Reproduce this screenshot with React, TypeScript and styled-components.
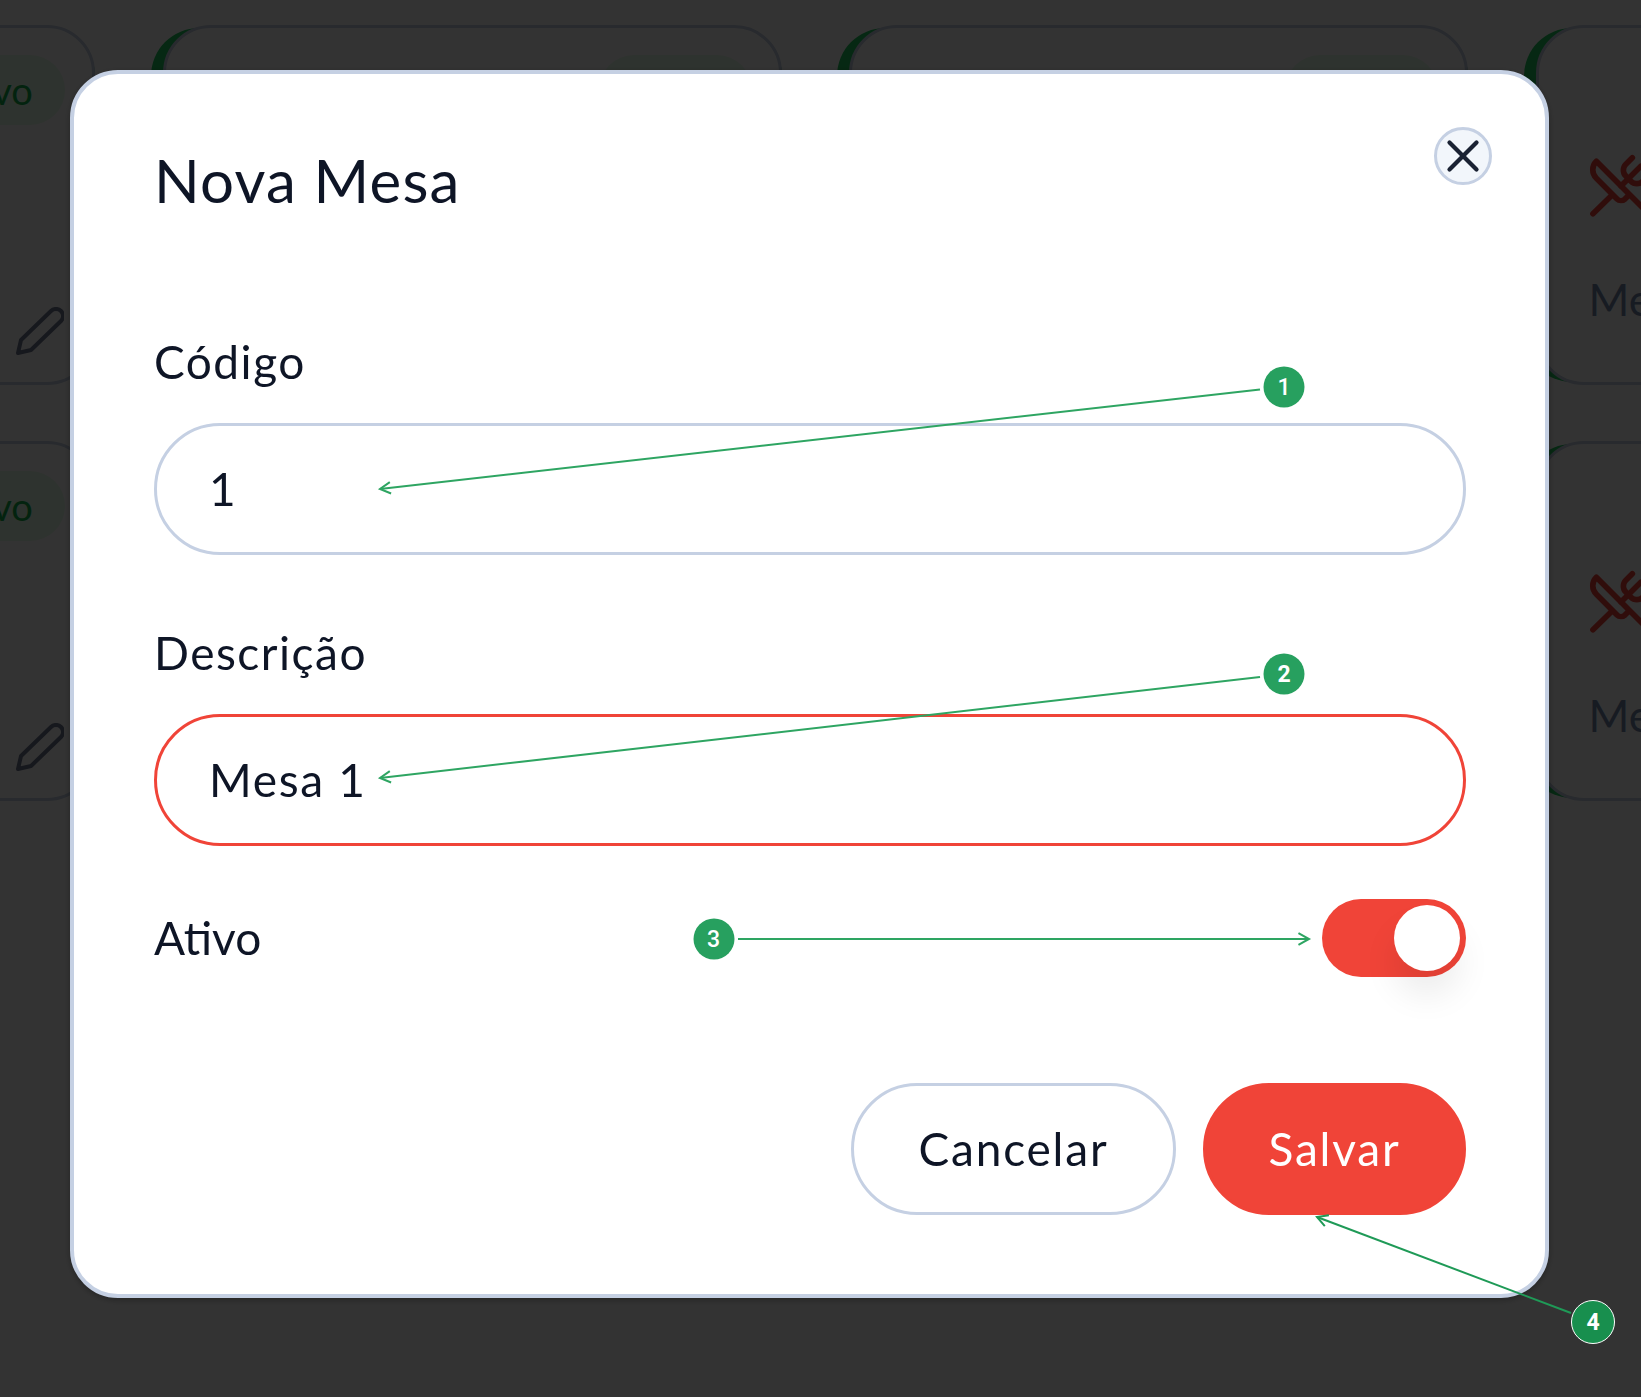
import styled, { createGlobalStyle } from 'styled-components';
import { UtensilsCrossed, X } from 'lucide-react';

const GlobalStyle = createGlobalStyle`
  html, body {
    margin: 0;
    padding: 0;
  }
  body {
    width: 1641px;
    height: 1397px;
    overflow: hidden;
    background: #ffffff;
    font-family: 'Lato', 'Noto Sans', sans-serif;
  }
`;

const tables = [1, 2, 3, 4, 5, 6, 7, 8];

const PencilIcon = () => (
  <svg width="50" height="50" viewBox="0 0 50 50" fill="none" stroke="currentColor" strokeWidth="4" strokeLinejoin="round">
    <path d="M37 4 A7 7 0 0 1 47 14 L17 43 L4 46 L7 33 Z" />
  </svg>
);

const TableCard = ({ name }: { name: string }) => (
  <CardEdge>
    <Card>
      <CardInfo>
        <UtensilsCrossed size={68} strokeWidth={2} color="#f04438" />
        <TableName>{name}</TableName>
      </CardInfo>
      <CardSide>
        <StatusPill>Ativo</StatusPill>
        <EditButton>
          <PencilIcon />
        </EditButton>
      </CardSide>
    </Card>
  </CardEdge>
);

const arrows = [
  { from: [1260, 389.5], to: [380, 489], color: '#2ea562' },
  { from: [1260, 677], to: [380, 778], color: '#2ea562' },
  { from: [738, 939], to: [1309, 939], color: '#2ea562' },
  { from: [1571, 1313], to: [1317, 1217], color: '#1f9a57' },
];

const arrowHead = (from: number[], to: number[]) => {
  const angle = Math.atan2(from[1] - to[1], from[0] - to[0]);
  const point = (delta: number) =>
    `${to[0] + 12 * Math.cos(angle + delta)},${to[1] + 12 * Math.sin(angle + delta)}`;
  return `${point(0.5)} ${to[0]},${to[1]} ${point(-0.5)}`;
};

export default function App() {
  return (
    <>
      <GlobalStyle />
      <TablesGrid>
        {tables.map((n) => (
          <TableCard key={n} name={`Mesa ${n}`} />
        ))}
      </TablesGrid>
      <Overlay>
        <Modal>
          <CloseButton>
            <X size={54} strokeWidth={1.9} />
          </CloseButton>
          <Title>Nova Mesa</Title>
          <Field $top={119}>
            <FieldLabel>Código</FieldLabel>
            <TextBox>1</TextBox>
          </Field>
          <Field $top={70}>
            <FieldLabel>Descrição</FieldLabel>
            <TextBox $focused>Mesa 1</TextBox>
          </Field>
          <ToggleRow>
            <ToggleLabel>Ativo</ToggleLabel>
            <Toggle>
              <Knob />
            </Toggle>
          </ToggleRow>
          <Actions>
            <CancelButton>Cancelar</CancelButton>
            <SaveButton>Salvar</SaveButton>
          </Actions>
        </Modal>
      </Overlay>
      <Arrows width="1641" height="1397" viewBox="0 0 1641 1397" fill="none">
        {arrows.map((a) => (
          <g key={a.to.join()} stroke={a.color} strokeWidth="2">
            <line x1={a.from[0]} y1={a.from[1]} x2={a.to[0]} y2={a.to[1]} />
            <polyline points={arrowHead(a.from, a.to)} />
          </g>
        ))}
      </Arrows>
      <Step $x={1284} $y={387}>1</Step>
      <Step $x={1284} $y={674} $heavy>2</Step>
      <Step $x={713.5} $y={939}>3</Step>
      <Step $x={1593} $y={1322} $heavy $outlined>4</Step>
    </>
  );
}

const TablesGrid = styled.div`
  display: grid;
  grid-template-columns: repeat(4, 631px);
  grid-auto-rows: 360px;
  column-gap: 55.5px;
  row-gap: 56px;
  width: 2300px;
  margin: 25px 0 0 -536px;
`;

const CardEdge = styled.div`
  display: flex;
  margin: 3px 0;
  background: #22c55e;
  border-radius: 48px;
`;

const Card = styled.div`
  flex: 1;
  box-sizing: border-box;
  margin: -3px 0 -3px 12px;
  display: flex;
  justify-content: space-between;
  padding: 27px 27px 27px 48px;
  background: #ffffff;
  border: 3px solid #c5d0e3;
  border-radius: 48px;
`;

const CardInfo = styled.div`
  display: flex;
  flex-direction: column;
  align-items: flex-start;
  gap: 53px;
  padding-top: 97px;
`;

const TableName = styled.div`
  margin-left: 2px;
  font-size: 44px;
  line-height: 52px;
  color: #7488aa;
`;

const CardSide = styled.div`
  display: flex;
  flex-direction: column;
  justify-content: space-between;
  align-items: flex-end;
`;

const StatusPill = styled.div`
  box-sizing: border-box;
  width: 153px;
  height: 70px;
  display: flex;
  align-items: center;
  justify-content: center;
  border-radius: 35px;
  background: #e6ffe9;
  color: #12b04a;
  font-size: 38px;
`;

const EditButton = styled.div`
  margin: 0 1px -2px 0;
  color: #707890;
  line-height: 0;
`;

const Overlay = styled.div`
  position: fixed;
  inset: 0;
  padding: 70px 0 0 70px;
  background: rgba(0, 0, 0, 0.8);
`;

const Modal = styled.div`
  position: relative;
  box-sizing: border-box;
  width: 1479px;
  height: 1228px;
  padding: 71px 79px 0 80px;
  background: #ffffff;
  border: 4px solid #c5d0e3;
  border-radius: 48px;
  box-shadow: 0 2px 6px rgba(0, 0, 0, 0.3);
  color: #0e1526;
`;

const CloseButton = styled.button`
  position: absolute;
  top: 53px;
  right: 53px;
  box-sizing: border-box;
  width: 58px;
  height: 58px;
  padding: 0;
  display: flex;
  align-items: center;
  justify-content: center;
  background: #f2f6fb;
  border: 3px solid #c5d0e3;
  border-radius: 50%;
  color: #1a2233;
  svg {
    flex: none;
  }
`;

const Title = styled.h1`
  margin: 0;
  font-size: 60px;
  line-height: 70px;
  font-weight: 400;
  letter-spacing: 1.2px;
`;

const Field = styled.div<{ $top: number }>`
  margin-top: ${(props) => props.$top}px;
`;

const FieldLabel = styled.div`
  font-size: 46px;
  line-height: 56px;
  letter-spacing: 1.5px;
`;

const ToggleLabel = styled(FieldLabel)`
  letter-spacing: 0;
`;

const TextBox = styled.div<{ $focused?: boolean }>`
  box-sizing: border-box;
  height: 132px;
  margin-top: 33px;
  padding: 0 52px 2px;
  display: flex;
  align-items: center;
  font-size: 46px;
  letter-spacing: 1.7px;
  border: 3px solid ${(props) => (props.$focused ? '#f04438' : '#c5d0e3')};
  border-radius: 66px;
`;

const ToggleRow = styled.div`
  margin-top: 53px;
  display: flex;
  justify-content: space-between;
  align-items: center;
`;

const Toggle = styled.div`
  box-sizing: border-box;
  width: 144px;
  height: 78px;
  padding: 6px;
  display: flex;
  justify-content: flex-end;
  background: #f04438;
  border-radius: 39px;
`;

const Knob = styled.div`
  width: 66px;
  height: 66px;
  background: #ffffff;
  border-radius: 50%;
  box-shadow: 0 24px 34px rgba(0, 0, 0, 0.08);
`;

const Actions = styled.div`
  margin-top: 106px;
  display: flex;
  justify-content: flex-end;
  gap: 27px;
`;

const CancelButton = styled.button`
  box-sizing: border-box;
  width: 325px;
  height: 132px;
  padding: 0 0 2px;
  background: #ffffff;
  border: 3px solid #c5d0e3;
  border-radius: 66px;
  color: #0e1526;
  font: inherit;
  font-size: 46px;
  letter-spacing: 1.8px;
`;

const SaveButton = styled(CancelButton)`
  width: 263px;
  background: #f04438;
  border-color: #f04438;
  color: #ffffff;
`;

const Arrows = styled.svg`
  position: absolute;
  top: 0;
  left: 0;
`;

const Step = styled.div<{ $x: number; $y: number; $outlined?: boolean; $heavy?: boolean }>`
  position: absolute;
  left: ${(props) => props.$x}px;
  top: ${(props) => props.$y}px;
  box-sizing: border-box;
  width: ${(props) => (props.$outlined ? 44 : 41)}px;
  height: ${(props) => (props.$outlined ? 44 : 41)}px;
  transform: translate(-50%, -50%);
  display: flex;
  align-items: center;
  justify-content: center;
  background: ${(props) => (props.$outlined ? '#188f4e' : '#27a05f')};
  border: ${(props) => (props.$outlined ? '1.5px solid #ffffff' : 'none')};
  border-radius: 50%;
  color: #ffffff;
  font-family: 'Roboto', 'Liberation Sans', sans-serif;
  font-size: 23px;
  font-weight: ${(props) => (props.$heavy ? 700 : 500)};
`;
